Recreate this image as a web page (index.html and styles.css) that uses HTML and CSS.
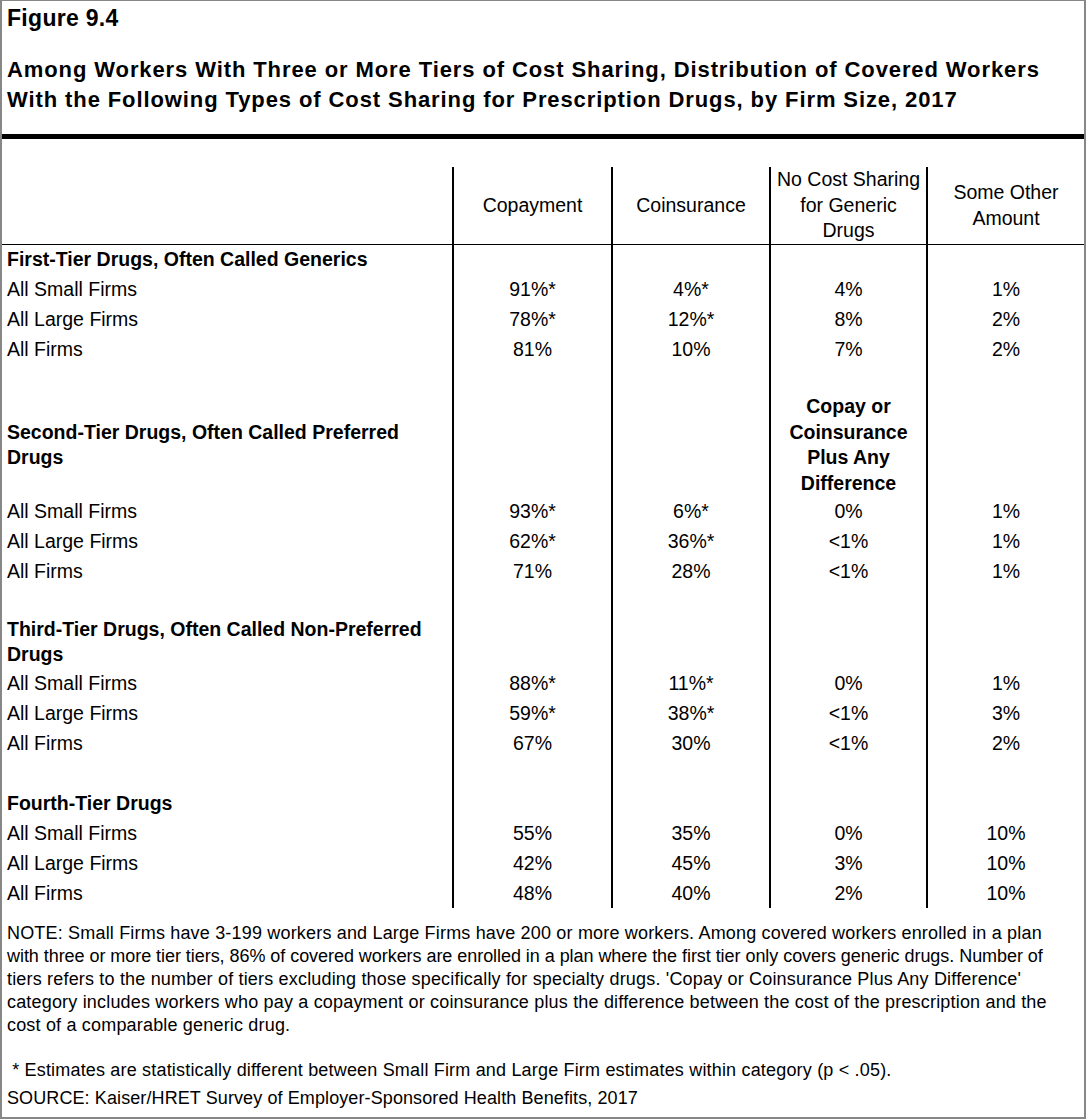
FILE: index.html
```html
<!DOCTYPE html>
<html lang="en">
<head>
<meta charset="utf-8">
<title>Figure 9.4</title>
<link rel="stylesheet" href="styles.css">
</head>
<body>
<div class="figure">
  <header class="fig-head">
    <div class="fig-num">Figure 9.4</div>
    <h1 class="fig-title">Among Workers With Three or More Tiers of Cost Sharing, Distribution of Covered Workers<br>With the Following Types of Cost Sharing for Prescription Drugs, by Firm Size, 2017</h1>
  </header>
  <div class="rule"></div>

  <div class="grid">
    <!-- header -->
    <div class="c lab hdr"></div>
    <div class="c num hdr">Copayment</div>
    <div class="c num hdr">Coinsurance</div>
    <div class="c num hdr">No Cost Sharing<br>for Generic<br>Drugs</div>
    <div class="c num hdr">Some Other<br>Amount</div>

    <!-- first tier -->
    <div class="c lab sec r29">First-Tier Drugs, Often Called Generics</div>
    <div class="c num r29"></div><div class="c num r29"></div><div class="c num r29"></div><div class="c num r29"></div>

    <div class="c lab">All Small Firms</div><div class="c num">91%*</div><div class="c num">4%*</div><div class="c num">4%</div><div class="c num">1%</div>
    <div class="c lab">All Large Firms</div><div class="c num">78%*</div><div class="c num">12%*</div><div class="c num">8%</div><div class="c num">2%</div>
    <div class="c lab">All Firms</div><div class="c num">81%</div><div class="c num">10%</div><div class="c num">7%</div><div class="c num">2%</div>

    <div class="c lab"></div><div class="c num"></div><div class="c num"></div><div class="c num"></div><div class="c num"></div>

    <!-- second tier -->
    <div class="c lab sec multi r102">Second-Tier Drugs, Often Called Preferred<br>Drugs</div>
    <div class="c num r102"></div><div class="c num r102"></div>
    <div class="c num sec multi r102">Copay or<br>Coinsurance<br>Plus Any<br>Difference</div>
    <div class="c num r102"></div>

    <div class="c lab">All Small Firms</div><div class="c num">93%*</div><div class="c num">6%*</div><div class="c num">0%</div><div class="c num">1%</div>
    <div class="c lab">All Large Firms</div><div class="c num">62%*</div><div class="c num">36%*</div><div class="c num">&lt;1%</div><div class="c num">1%</div>
    <div class="c lab">All Firms</div><div class="c num">71%</div><div class="c num">28%</div><div class="c num">&lt;1%</div><div class="c num">1%</div>

    <div class="c lab"></div><div class="c num"></div><div class="c num"></div><div class="c num"></div><div class="c num"></div>

    <!-- third tier -->
    <div class="c lab sec multi r52">Third-Tier Drugs, Often Called Non-Preferred<br>Drugs</div>
    <div class="c num r52"></div><div class="c num r52"></div><div class="c num r52"></div><div class="c num r52"></div>

    <div class="c lab">All Small Firms</div><div class="c num">88%*</div><div class="c num">11%*</div><div class="c num">0%</div><div class="c num">1%</div>
    <div class="c lab">All Large Firms</div><div class="c num">59%*</div><div class="c num">38%*</div><div class="c num">&lt;1%</div><div class="c num">3%</div>
    <div class="c lab">All Firms</div><div class="c num">67%</div><div class="c num">30%</div><div class="c num">&lt;1%</div><div class="c num">2%</div>

    <div class="c lab"></div><div class="c num"></div><div class="c num"></div><div class="c num"></div><div class="c num"></div>

    <!-- fourth tier -->
    <div class="c lab sec">Fourth-Tier Drugs</div>
    <div class="c num"></div><div class="c num"></div><div class="c num"></div><div class="c num"></div>

    <div class="c lab">All Small Firms</div><div class="c num">55%</div><div class="c num">35%</div><div class="c num">0%</div><div class="c num">10%</div>
    <div class="c lab">All Large Firms</div><div class="c num">42%</div><div class="c num">45%</div><div class="c num">3%</div><div class="c num">10%</div>
    <div class="c lab">All Firms</div><div class="c num">48%</div><div class="c num">40%</div><div class="c num">2%</div><div class="c num">10%</div>
  </div>

  <div class="notes">
    <p class="note">NOTE: Small Firms have 3-199 workers and Large Firms have 200 or more workers. Among covered workers enrolled in a plan<br><span class="tight">with three or more tier tiers, 86% of covered workers are enrolled in a plan where the first tier only covers generic drugs. Number of</span><br>tiers refers to the number of tiers excluding those specifically for specialty drugs. 'Copay or Coinsurance Plus Any Difference'<br>category includes workers who pay a copayment or coinsurance plus the difference between the cost of the prescription and the<br>cost of a comparable generic drug.</p>
    <p class="foot star">&nbsp;* Estimates are statistically different between Small Firm and Large Firm estimates within category (p &lt; .05).</p>
    <p class="foot source">SOURCE: Kaiser/HRET Survey of Employer-Sponsored Health Benefits, 2017</p>
  </div>
</div>
</body>
</html>
```

FILE: styles.css
```css
html, body {
  margin: 0;
  padding: 0;
  background: #fff;
}

.figure {
  width: 1086px;
  height: 1119px;
  box-sizing: border-box;
  border: 2px solid #878787;
  border-top-width: 1px;
  background: #fff;
  color: #000;
  font-family: "Liberation Sans", Arial, sans-serif;
  overflow: hidden;
}

.fig-head {
  padding-left: 5px;
}

.fig-num {
  font-weight: bold;
  font-size: 23px;
  line-height: 26px;
  padding-top: 4px;
  letter-spacing: 0.3px;
}

.fig-title {
  margin: 24px 0 0;
  font-size: 22px;
  line-height: 30px;
  font-weight: bold;
  letter-spacing: 0.9px;
  white-space: nowrap;
}

.rule {
  height: 5px;
  background: #000;
  margin-top: 19px;
}

.grid {
  margin-top: 28px;
  display: grid;
  grid-template-columns: 450px 159px 158px 157px 158px;
  grid-auto-rows: auto;
  font-size: 19.5px;
}

.c {
  box-sizing: border-box;
  display: flex;
  align-items: center;
  height: 30px;
  white-space: nowrap;
}

.lab {
  padding-left: 5px;
}

.num {
  justify-content: center;
  text-align: center;
  border-left: 2px solid #000;
}

.hdr {
  height: 78px;
  line-height: 25.5px;
  border-bottom: 1px solid #000;
}

.sec {
  font-weight: bold;
}

.multi {
  line-height: 25.5px;
}

.r29 { height: 29px; }
.r52 { height: 52px; }
.r102 { height: 102px; }

.notes {
  padding-left: 5px;
  margin-top: 14px;
  font-size: 18px;
  letter-spacing: 0.18px;
  white-space: nowrap;
}

.note {
  margin: 0;
  line-height: 23px;
}

.tight {
  letter-spacing: -0.05px;
}

.foot {
  margin: 0;
  line-height: 28px;
}

.star {
  margin-top: 19px;
}

.source {
  letter-spacing: 0.1px;
}
```
